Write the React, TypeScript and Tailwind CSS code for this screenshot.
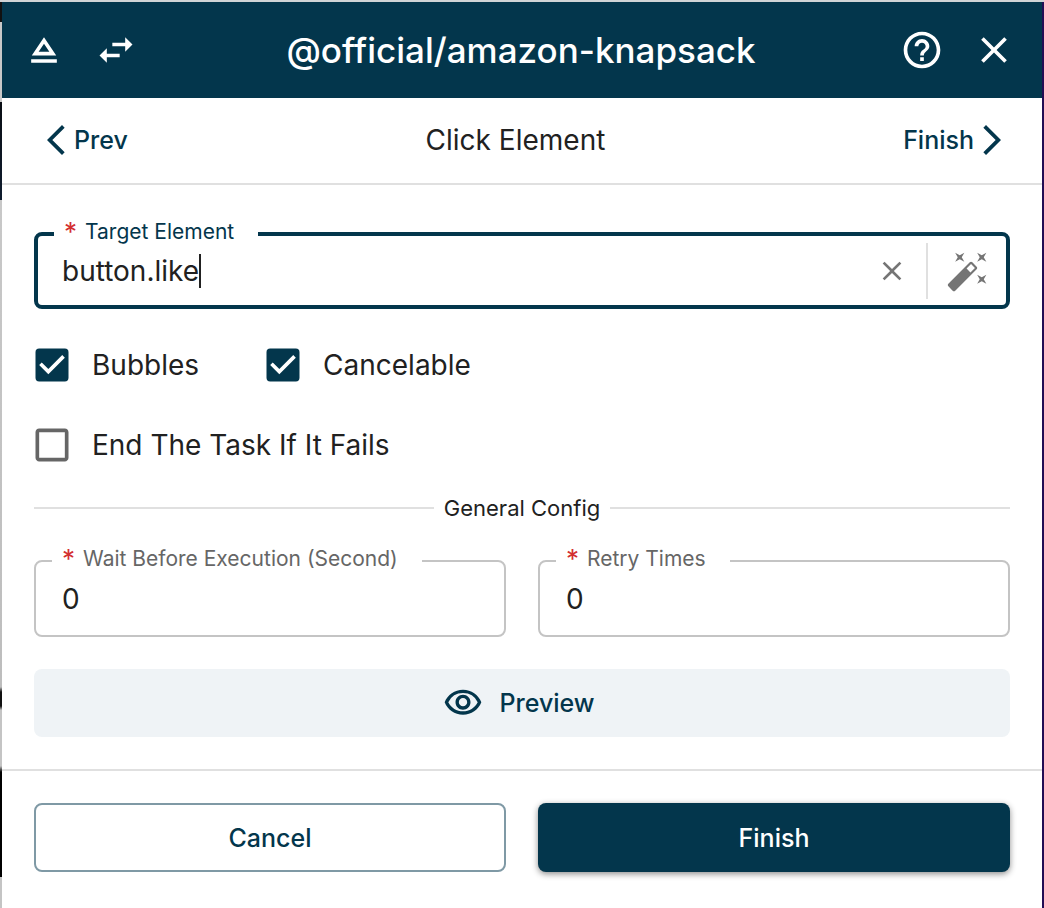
import { useState } from "react";
import type { ReactNode } from "react";
import {
  MdArrowBackIosNew,
  MdArrowForwardIos,
  MdCheckBox,
  MdCheckBoxOutlineBlank,
  MdClose,
  MdHelpOutline,
  MdOutlineVisibility,
} from "react-icons/md";

function Icon({ d, className }: { d: string; className: string }) {
  return (
    <svg viewBox="0 0 24 24" fill="currentColor" aria-hidden="true" className={className}>
      <path d={d} />
    </svg>
  );
}

const EJECT = "M5 17h14v2H5v-2zm7-12L5.33 15h13.34L12 5zm0 3.6l2.93 4.4H9.07L12 8.6z";
const SWAP = "M6.99 11L3 15l3.99 4v-3H14v-2H6.99v-3zM21 9l-3.99-4v3H10v2h7.01v3L21 9z";
const WAND =
  "M7.5 5.6L5 7l1.4-2.5L5 2l2.5 1.4L10 2 8.6 4.5 10 7 7.5 5.6zm12 9.8L22 14l-1.4 2.5L22 19l-2.5-1.4L17 19l1.4-2.5L17 14l2.5 1.4zM22 2l-1.4 2.5L22 7l-2.5-1.4L17 7l1.4-2.5L17 2l2.5 1.4L22 2zm-8.66 10.78l2.44-2.44-2.12-2.12-2.44 2.44 2.12 2.12zm1.03-5.49l2.34 2.34c.39.37.39 1.02 0 1.41L5.04 22.71c-.39.39-1.04.39-1.41 0l-2.34-2.34c-.39-.37-.39-1.02 0-1.41L12.96 7.29c.39-.39 1.04-.39 1.41 0z";

function Check({ label, initial = false }: { label: string; initial?: boolean }) {
  const [on, setOn] = useState(initial);
  return (
    <label className="flex cursor-pointer items-center gap-[18px]">
      <span className="grid">
        <input
          type="checkbox"
          checked={on}
          onChange={(e) => setOn(e.target.checked)}
          className="col-start-1 row-start-1 size-11 appearance-none"
        />
        {on ? (
          <MdCheckBox className="pointer-events-none col-start-1 row-start-1 size-11 text-[#03364c]" />
        ) : (
          <MdCheckBoxOutlineBlank className="pointer-events-none col-start-1 row-start-1 size-11 text-[#666666]" />
        )}
      </span>
      <span>{label}</span>
    </label>
  );
}

function Field({
  id,
  label,
  active = false,
  children,
}: {
  id: string;
  label: string;
  active?: boolean;
  children: ReactNode;
}) {
  return (
    <fieldset
      className={
        active
          ? "min-w-0 rounded-lg border-4 border-[#03364c] pl-4"
          : "min-w-0 rounded-lg border-2 border-[#c4c4c4] pl-4"
      }
    >
      <legend className="pr-6 pb-1 pl-[10px] text-[21px] leading-5">
        <label htmlFor={id} className={active ? "flex gap-2 text-[#03364c]" : "flex gap-2 text-[#666666]"}>
          <span className="text-[26px] text-[#d32f2f]">*</span>
          {label}
        </label>
      </legend>
      {children}
    </fieldset>
  );
}

function NumberField({ id, label }: { id: string; label: string }) {
  const [value, setValue] = useState("0");
  return (
    <Field id={id} label={label}>
      <input
        id={id}
        inputMode="numeric"
        value={value}
        onChange={(e) => setValue(e.target.value)}
        className="mb-[10px] block h-[52px] w-full bg-transparent px-[10px] outline-none"
      />
    </Field>
  );
}

export default function App() {
  const [target, setTarget] = useState("button.like");
  return (
    <div className="flex min-h-screen flex-col bg-white font-[Inter,sans-serif] text-[28px] leading-8 text-[#212121]">
      <div className="h-[2px] bg-[#d0d4d6]" />
      <div className="flex flex-1">
        <div className="w-[2px] bg-[linear-gradient(#111111_20px,#c8c8c8_20px,#c8c8c8_100px,#0a0e14_100px,#0f1c2e_198px,#c8c8c8_198px,#bdbdbd_685px,#111111_690px,#111111_704px,#c4c4c4_708px,#c4c4c4_764px,#000000_770px,#000000_875px,#c4c4c4_875px)]" />
        <div className="flex min-w-0 flex-1 flex-col">
          <header className="grid h-24 grid-cols-[1fr_auto_1fr] items-center bg-[#03364c] pr-[26px] pl-5 text-white">
            <div className="flex gap-7">
              <button aria-label="Collapse">
                <Icon d={EJECT} className="size-11" />
              </button>
              <button aria-label="Switch side">
                <Icon d={SWAP} className="size-11" />
              </button>
            </div>
            <h1 className="pl-1 text-[35px] font-medium">@official/amazon-knapsack</h1>
            <div className="flex gap-7 justify-self-end">
              <button aria-label="Help">
                <MdHelpOutline className="size-11" />
              </button>
              <button aria-label="Close">
                <MdClose className="size-11" />
              </button>
            </div>
          </header>

          <nav className="flex items-center justify-between border-b-2 border-[#e0e0e0] pt-6 pr-8 pb-[25px] pl-9">
            <button className="flex h-9 items-center text-[25px] font-medium text-[#03364c]">
              <MdArrowBackIosNew className="size-9" />
              Prev
            </button>
            <h2>Click Element</h2>
            <button className="flex h-9 items-center text-[25px] font-medium text-[#03364c]">
              Finish
              <MdArrowForwardIos className="size-9" />
            </button>
          </nav>

          <main className="flex flex-col border-b-2 border-[#e0e0e0] px-8 pt-[37px] pb-8">
            <Field id="target" label="Target Element" active>
              <div className="-mt-[3px] flex items-center pb-[6px]">
                <div className="flex min-w-0 flex-1 items-center pl-2">
                  <input
                    id="target"
                    value={target}
                    onChange={(e) => setTarget(e.target.value)}
                    className="min-w-0 field-sizing-content bg-transparent caret-transparent outline-none"
                  />
                  <span className="h-[34px] w-[2px] bg-[#212121]" />
                </div>
                <button aria-label="Clear" onClick={() => setTarget("")} className="px-[18px] text-[#757575]">
                  <MdClose className="size-8" />
                </button>
                <div className="flex h-14 items-center border-l-2 border-[#e0e0e0] pr-4 pl-[18px]">
                  <button aria-label="Pick element" className="text-[#757575]">
                    <Icon d={WAND} className="size-11" />
                  </button>
                </div>
              </div>
            </Field>

            <div className="mt-[34px] -ml-1 flex flex-wrap gap-x-[62px] gap-y-9">
              <Check label="Bubbles" initial />
              <Check label="Cancelable" initial />
              <div className="basis-full">
                <Check label="End The Task If It Fails" />
              </div>
            </div>

            <div className="my-[27px] flex items-center gap-[10px] text-[22px] leading-7">
              <span className="h-[2px] flex-1 bg-[#e0e0e0]" />
              <h3>General Config</h3>
              <span className="h-[2px] flex-1 bg-[#e0e0e0]" />
            </div>

            <div className="grid grid-cols-2 gap-8">
              <NumberField id="wait" label="Wait Before Execution (Second)" />
              <NumberField id="retry" label="Retry Times" />
            </div>

            <button className="mt-8 flex h-[68px] items-center justify-center gap-4 rounded-lg bg-[#eff3f6] pr-[6px] text-[25px] font-medium text-[#03364c]">
              <MdOutlineVisibility className="size-10" />
              Preview
            </button>
          </main>

          <footer className="grid grid-cols-2 gap-8 p-8 text-[25px] font-medium">
            <button className="h-[69px] rounded-lg border-2 border-[#7f99a5] text-[#03364c]">Cancel</button>
            <button className="h-[69px] rounded-lg bg-[#03364c] text-white shadow-[0_2px_6px_rgba(0,0,0,0.45)]">
              Finish
            </button>
          </footer>
        </div>
        <div className="w-[2px] bg-[#230d54]" />
      </div>
    </div>
  );
}
